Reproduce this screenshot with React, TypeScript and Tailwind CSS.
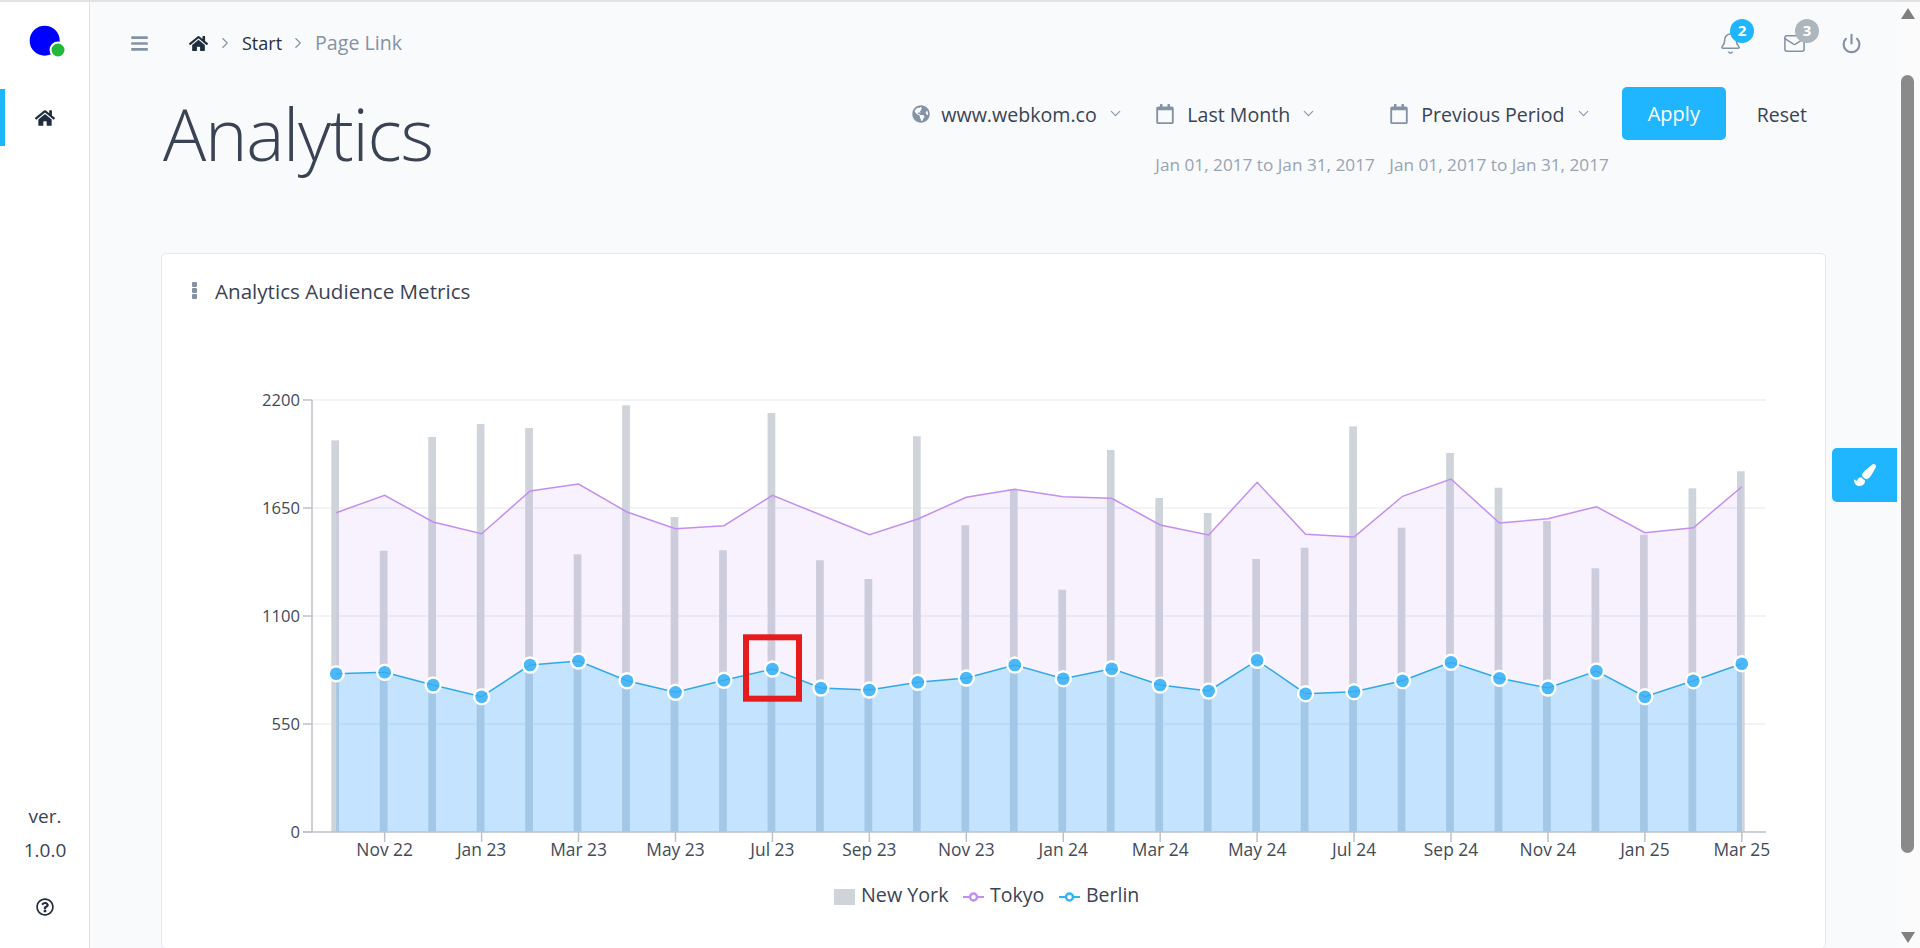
import { FaBars, FaGlobeAmericas, FaHome, FaPaintBrush, FaRegCalendar, FaRegQuestionCircle } from 'react-icons/fa';
import { Bell, ChevronDown, ChevronRight, Mail, Power } from 'lucide-react';

// chart values read as page pixels, one entry per month from Oct 22 to Mar 25
const barTops = [440.3, 550.7, 437, 424, 428, 554.3, 405.3, 517, 550.3, 413, 560.3, 579, 436.3, 525.3, 489.3, 589.7, 450, 498, 513, 559, 547.7, 426.3, 527.7, 453, 487.7, 521, 568.3, 534.7, 488.3, 471.3];
const tokyo = [512.7, 495.3, 522, 533.7, 491, 484, 512, 528.7, 525.7, 495.3, 515, 534.7, 519, 497.3, 489.3, 496.7, 498.3, 525, 535, 482.3, 534.3, 537, 496.3, 479, 523, 518.7, 506.7, 532.7, 527.7, 486.7];
const berlin = [673.7, 672.3, 685, 696.7, 665, 661, 680.7, 692.3, 680.3, 669, 688, 690, 682.3, 678, 665, 678.7, 668.7, 685, 691, 660.3, 693.7, 691.7, 680.7, 662.3, 678.3, 688, 671, 696.7, 680.7, 663.7];
const xLabels = ['Nov 22', 'Jan 23', 'Mar 23', 'May 23', 'Jul 23', 'Sep 23', 'Nov 23', 'Jan 24', 'Mar 24', 'May 24', 'Jul 24', 'Sep 24', 'Nov 24', 'Jan 25', 'Mar 25'];
const yLabels = [
  { label: '2200', y: 400 },
  { label: '1650', y: 508 },
  { label: '1100', y: 616 },
  { label: '550', y: 724 },
  { label: '0', y: 832 },
];

const xAt = (i: number) => 336.2 + i * 48.47;
const linePoints = (values: number[]) => values.map((y, i) => `${xAt(i)},${y}`).join(' ');
const areaPoints = (values: number[]) => `${xAt(0)},832 ${linePoints(values)} ${xAt(29)},832`;

const AudienceChart = () => (
  <svg width="1663" height="568" viewBox="162 380 1663 568" className="block">
    <defs>
      <clipPath id="dot-clip">
        {berlin.map((y, i) => (
          <circle key={i} cx={xAt(i)} cy={y} r="6.3" />
        ))}
      </clipPath>
    </defs>

    {yLabels.slice(0, 4).map((t) => (
      <line key={t.y} x1="312" x2="1766" y1={t.y} y2={t.y} stroke="#edeff2" strokeWidth="1.5" />
    ))}
    {barTops.map((top, i) => (
      <rect key={i} x={xAt(i) - 4.85} y={top} width="7.7" height={832 - top} fill="#ced4da" />
    ))}
    <polygon points={areaPoints(tokyo)} fill="#c39bf5" fillOpacity="0.13" />
    <polygon points={areaPoints(berlin)} fill="#2fbaff" fillOpacity="0.26" />
    <polyline points={linePoints(tokyo)} fill="none" stroke="#c28ff0" strokeWidth="1.5" />
    <polyline points={linePoints(berlin)} fill="none" stroke="#2fa9e8" strokeWidth="1.5" />

    {berlin.map((y, i) => (
      <g key={i}>
        <circle cx={xAt(i)} cy={y} r="8.7" fill="#ffffff" />
        <circle cx={xAt(i)} cy={y} r="6.3" fill="#4db8f9" />
      </g>
    ))}
    <polyline points={linePoints(berlin)} fill="none" stroke="#2fa9e8" strokeWidth="1" clipPath="url(#dot-clip)" />

    <line x1="312" x2="312" y1="400" y2="832" stroke="#bcc2c9" strokeWidth="1.5" />
    <line x1="303" x2="1766" y1="832" y2="832" stroke="#bcc2c9" strokeWidth="1.5" />
    {yLabels.map((t) => (
      <g key={t.label}>
        <line x1="303" x2="312" y1={t.y} y2={t.y} stroke="#bcc2c9" strokeWidth="1.5" />
        <text x="300" y={t.y + 5.5} textAnchor="end" className="fill-[#444b57] text-[16.6px]">
          {t.label}
        </text>
      </g>
    ))}
    {xLabels.map((label, i) => {
      const x = xAt(i * 2 + 1);
      return (
        <g key={label}>
          <line x1={x} x2={x} y1="832" y2="842" stroke="#bcc2c9" strokeWidth="1.5" />
          <text x={x} y="856" textAnchor="middle" className="fill-[#444b57] text-[17.4px]">
            {label}
          </text>
        </g>
      );
    })}

    {/* legend */}
    <rect x="834" y="889" width="21" height="16" fill="#ced4da" />
    <text x="861" y="902" className="fill-[#3a4354] text-[19.7px]">New York</text>
    <line x1="963" x2="984" y1="897" y2="897" stroke="#c28ff0" strokeWidth="2" />
    <circle cx="973.5" cy="897" r="3.5" fill="#ffffff" stroke="#c28ff0" strokeWidth="2.5" />
    <text x="990" y="902" className="fill-[#3a4354] text-[19.5px]">Tokyo</text>
    <line x1="1059" x2="1080" y1="897" y2="897" stroke="#2fb4f5" strokeWidth="2" />
    <circle cx="1069.5" cy="897" r="3.5" fill="#ffffff" stroke="#2fb4f5" strokeWidth="2.5" />
    <text x="1086" y="902" className="fill-[#3a4354] text-[19.5px]">Berlin</text>

    {/* red marker box from the reference */}
    <rect x="746" y="637.3" width="53" height="61.4" fill="none" stroke="#e61c1c" strokeWidth="6" />
  </svg>
);

const DatePicker = ({ label, width }: { label: string; width: string }) => (
  <div className={width}>
    <div className="flex h-[53px] items-center text-[#8492a6]">
      <FaRegCalendar size={20} />
      <span className="ml-[12px] pt-[2px] text-[19.6px] text-[#3a4354]">{label}</span>
      <ChevronDown size={17} strokeWidth={1.5} className="ml-[10px]" />
    </div>
    <div className="mt-[13px] whitespace-nowrap text-[17.2px] leading-[24px] text-[#99a3b2]">Jan 01, 2017 to Jan 31, 2017</div>
  </div>
);

const App = () => {
  return (
    <div className="flex h-[948px] w-[1920px] overflow-hidden border-t-2 border-[#e2e2e2] bg-white font-['Open_Sans','Noto_Sans',sans-serif]">
      <aside className="flex w-[90px] shrink-0 flex-col border-r border-[#dee2e6] bg-white">
        <svg width="89" height="87" viewBox="0 2 89 87" className="block">
          <circle cx="44.7" cy="40.7" r="15" fill="#0000ff" />
          <circle cx="58" cy="50" r="7.5" fill="#22b83c" stroke="#ffffff" strokeWidth="2" />
        </svg>
        <div className="flex h-[57px] items-center justify-center border-l-[5px] border-[#1fb6ff] pr-[5px] text-[#1f2d3d]">
          <FaHome size={20} />
        </div>
        <div className="mt-auto flex flex-col items-center pl-[1px] text-[19px] leading-[34px] text-[#3a4354]">
          <span>ver.</span>
          <span>1.0.0</span>
        </div>
        <div className="mb-[32px] mt-[31px] flex justify-center text-[#1f2d3d]">
          <FaRegQuestionCircle size={18} />
        </div>
      </aside>

      <main className="relative w-[1807px] shrink-0 bg-[#f9fafc]">
        <header className="flex h-[82px] items-center pl-[40px] pr-[35px]">
          <FaBars size={19} className="text-[#8492a6]" />
          <FaHome size={19} className="ml-[40px] text-[#1f2d3d]" />
          <ChevronRight size={18} strokeWidth={1.5} className="ml-[8px] text-[#8492a6]" />
          <span className="ml-[8px] text-[18px] text-[#1f2d3d]">Start</span>
          <ChevronRight size={18} strokeWidth={1.5} className="ml-[7px] text-[#8492a6]" />
          <span className="ml-[8px] text-[19.6px] text-[#8492a6]">Page Link</span>

          <div className="ml-auto flex items-center text-[#8492a6]">
            <div className="relative">
              <Bell size={23} strokeWidth={1.6} />
              <span className="absolute left-[11px] top-[-13px] flex h-[24px] w-[24px] items-center justify-center rounded-full bg-[#1fb6ff] text-[15px] font-bold text-white">2</span>
            </div>
            <div className="relative ml-[41px]">
              <Mail size={23} strokeWidth={1.6} />
              <span className="absolute left-[12px] top-[-13px] flex h-[24px] w-[24px] items-center justify-center rounded-full bg-[#adb5bd] text-[15px] font-bold text-white">3</span>
            </div>
            <Power size={21} strokeWidth={2.5} className="ml-[35px]" />
          </div>
        </header>

        <section className="flex h-[169px] items-start justify-between pl-[73px] pr-[90px]">
          <h1 className="mt-[4px] text-[72px] font-light leading-[90px] tracking-[-1.3px] text-[#3a4354]">Analytics</h1>
          <div className="mt-[3px] flex items-start">
            <div className="flex h-[53px] w-[243px] items-center text-[#8492a6]">
              <FaGlobeAmericas size={18} />
              <span className="ml-[11px] pt-[2px] text-[19.6px] text-[#3a4354]">www.webkom.co</span>
              <ChevronDown size={17} strokeWidth={1.5} className="ml-[10px]" />
            </div>
            <DatePicker label="Last Month" width="w-[234px]" />
            <DatePicker label="Previous Period" width="w-[232.5px]" />
            <button className="flex h-[53px] w-[104px] items-center justify-center rounded-[5px] bg-[#1fb6ff] text-[20px] text-white">Apply</button>
            <button className="ml-[31px] flex h-[53px] items-center pt-[2px] text-[19.5px] text-[#3a4354]">Reset</button>
          </div>
        </section>

        <section className="ml-[71px] w-[1665px] rounded-[5px] border border-[#e4e7ec] bg-white">
          <div className="flex h-[126px] items-start pl-[30px] pt-[21px]">
            <div className="mt-[7px] flex flex-col gap-[1.5px]">
              <span className="h-[4.5px] w-[5px] rounded-[1px] bg-[#8492a6]" />
              <span className="h-[4.5px] w-[5px] rounded-[1px] bg-[#8492a6]" />
              <span className="h-[4.5px] w-[5px] rounded-[1px] bg-[#8492a6]" />
            </div>
            <h2 className="ml-[18px] text-[20.6px] leading-[32px] text-[#3a4354]">Analytics Audience Metrics</h2>
          </div>
          <AudienceChart />
        </section>

        <button className="absolute right-0 top-[446px] flex h-[54px] w-[65px] items-center justify-center rounded-l-[5px] bg-[#1fb6ff] text-white">
          <FaPaintBrush size={22} />
        </button>
      </main>

      {/* browser scrollbar */}
      <div className="flex w-[23px] shrink-0 flex-col items-center bg-[#fbfbfb] pr-[2px]">
        <svg width="14" height="11" viewBox="0 0 14 11" className="mt-[6px] block">
          <path d="M7 0L14 11H0Z" fill="#808080" />
        </svg>
        <div className="mt-[56px] h-[778px] w-[13px] rounded-full bg-[#8a8a8a]" />
        <svg width="14" height="11" viewBox="0 0 14 11" className="mt-[79px] block">
          <path d="M7 11L14 0H0Z" fill="#808080" />
        </svg>
      </div>
    </div>
  );
};

export default App;
